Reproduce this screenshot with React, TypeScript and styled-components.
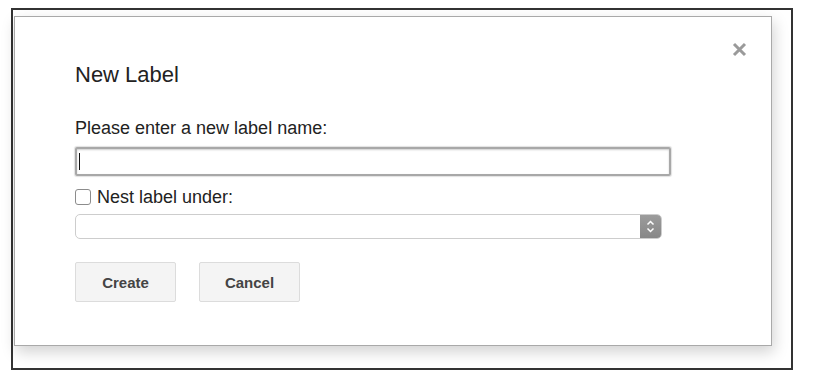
import styled, { createGlobalStyle } from "styled-components";

const GlobalStyle = createGlobalStyle`
   body {
      margin: 0;
      background: #ffffff;
      font-family: "Liberation Sans", Arial, sans-serif;
   }
`;

const Frame = styled.div`
   box-sizing: border-box;
   width: 782px;
   height: 362px;
   margin: 8px 0 0 11px;
   border: 2px solid #333333;
   background: #ffffff;
   padding: 6px 0 0 1px;
`;

const Dialog = styled.div`
   box-sizing: border-box;
   width: 758px;
   height: 330px;
   border: 1px solid #a9a9a9;
   background: #ffffff;
   box-shadow: 2px 6px 14px rgba(0, 0, 0, 0.18);
   padding: 25px 24px 0 60px;
   display: flex;
   flex-direction: column;
   align-items: flex-start;
`;

const Header = styled.div`
   display: flex;
   justify-content: space-between;
   align-items: flex-start;
   align-self: stretch;
`;

const Title = styled.h1`
   margin: 21px 0 0 0;
   font-size: 22px;
   line-height: 24px;
   font-weight: normal;
   color: #222222;
`;

const CloseButton = styled.div`
   width: 15px;
   height: 15px;
   cursor: pointer;
   display: flex;
`;

const FieldLabel = styled.div`
   margin-top: 31px;
   font-size: 18px;
   line-height: 20px;
   color: #222222;
`;

const TextBox = styled.div`
   box-sizing: border-box;
   margin-top: 9px;
   width: 596px;
   height: 29px;
   border: 2px solid #a8a8a8;
   border-radius: 2px;
   box-shadow: 0 0 1px 1px rgba(0, 0, 0, 0.12), inset 0 1px 2px rgba(0, 0, 0, 0.2);
   display: flex;
   align-items: center;
   padding-left: 2px;
`;

const Caret = styled.span`
   width: 1px;
   height: 17px;
   background: #111111;
`;

const CheckRow = styled.label`
   margin-top: 11px;
   display: flex;
   align-items: center;
   gap: 6px;
   font-size: 18px;
   line-height: 20px;
   color: #222222;
`;

const CheckBox = styled.span`
   box-sizing: border-box;
   width: 16px;
   height: 16px;
   border: 1px solid #8c8c8c;
   border-radius: 3px;
   background: #ffffff;
`;

const SelectBox = styled.div`
   box-sizing: border-box;
   margin-top: 7px;
   width: 587px;
   height: 25px;
   border: 1px solid #cdcdcd;
   border-radius: 5px;
   display: flex;
   justify-content: flex-end;
   overflow: hidden;
`;

const Stepper = styled.div`
   width: 21px;
   background: linear-gradient(#9c9c9c, #878787);
   display: flex;
   align-items: center;
   justify-content: center;
`;

const ButtonRow = styled.div`
   margin-top: 23px;
   display: flex;
   gap: 23px;
`;

const Button = styled.button`
   box-sizing: border-box;
   width: 101px;
   height: 40px;
   border: 1px solid #dcdcdc;
   border-radius: 2px;
   background: #f4f4f4;
   color: #444444;
   font-family: "Liberation Sans", Arial, sans-serif;
   font-weight: bold;
   font-size: 15px;
   cursor: pointer;
`;

const App: React.FC = () => {
   return (
      <>
         <GlobalStyle />
         <Frame>
            <Dialog>
               <Header>
                  <Title>New Label</Title>
                  <CloseButton>
                     <svg width="15" height="15" viewBox="0 0 15 15">
                        <path
                           d="M2 2 L13 13 M13 2 L2 13"
                           stroke="#9a9a9a"
                           strokeWidth="3"
                        />
                     </svg>
                  </CloseButton>
               </Header>
               <FieldLabel>Please enter a new label name:</FieldLabel>
               <TextBox>
                  <Caret />
               </TextBox>
               <CheckRow>
                  <CheckBox />
                  Nest label under:
               </CheckRow>
               <SelectBox>
                  <Stepper>
                     <svg width="9" height="15" viewBox="0 0 9 15">
                        <path
                           d="M1.5 5.5 L4.5 2.5 L7.5 5.5 M1.5 9.5 L4.5 12.5 L7.5 9.5"
                           stroke="#ffffff"
                           strokeWidth="1.5"
                           fill="none"
                        />
                     </svg>
                  </Stepper>
               </SelectBox>
               <ButtonRow>
                  <Button>Create</Button>
                  <Button>Cancel</Button>
               </ButtonRow>
            </Dialog>
         </Frame>
      </>
   );
};

export default App;
